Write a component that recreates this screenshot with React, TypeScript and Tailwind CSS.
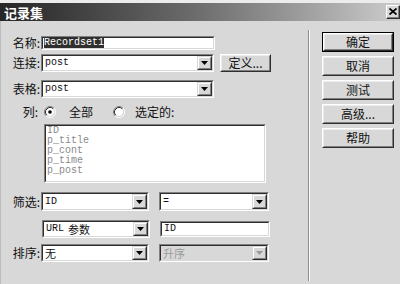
import React from 'react'

const ui = "font-['Noto_Sans_CJK_SC','Liberation_Sans',sans-serif] text-[12px] leading-none text-[#111]"
const mono = "font-['Liberation_Mono','Noto_Sans_CJK_SC',monospace] text-[10px] leading-none"
const cjkField = "text-[11px] leading-[12px]"

function Arrow({ disabled }: { disabled?: boolean }) {
    return (
        <div className="flex w-[15px] border border-t-[#d8d8d8] border-l-[#d8d8d8] border-b-[#2e2e2e] border-r-[#2e2e2e] bg-[#d8d8d8]">
            <div className="flex flex-1 items-center justify-center border border-t-white border-l-white border-b-[#808080] border-r-[#808080]">
                <svg width="7" height="4" viewBox="0 0 7 4">
                    <path d="M0 0h7L3.5 4z" fill={disabled ? '#9a9a9a' : '#000'} />
                </svg>
            </div>
        </div>
    )
}

function Field({ size, disabled, arrow, children }: { size: string; disabled?: boolean; arrow?: boolean; children?: React.ReactNode }) {
    return (
        <div className={`${size} flex border border-t-[#808080] border-l-[#808080] border-b-white border-r-white`}>
            <div className={`flex flex-1 min-w-0 border border-t-[#2e2e2e] border-l-[#2e2e2e] border-b-[#d8d8d8] border-r-[#d8d8d8] ${disabled ? 'bg-[#d8d8d8]' : 'bg-white'}`}>
                <div className="flex flex-1 min-w-0 items-center whitespace-nowrap pl-[2px]">{children}</div>
                {arrow && <Arrow disabled={disabled} />}
            </div>
        </div>
    )
}

function Btn({ label, def, size }: { label: string; def?: boolean; size: string }) {
    return (
        <div className={`${size} flex ${def ? 'border border-black' : ''}`}>
            <div className="flex flex-1 border border-t-white border-l-white border-b-[#2e2e2e] border-r-[#2e2e2e]">
                <div className="flex flex-1 items-center justify-center border border-t-[#ececec] border-l-[#ececec] border-b-[#808080] border-r-[#808080] bg-[#d8d8d8]">
                    {label}
                </div>
            </div>
        </div>
    )
}

function Radio({ checked }: { checked?: boolean }) {
    return (
        <svg width="12" height="12" viewBox="0 0 12 12">
            <circle cx="6" cy="6" r="4.2" fill="#fff" />
            <path d="M2.11 9.89A5.5 5.5 0 0 1 9.89 2.11" stroke="#808080" fill="none" />
            <path d="M9.89 2.11A5.5 5.5 0 0 1 2.11 9.89" stroke="#fff" fill="none" />
            <path d="M2.82 9.18A4.5 4.5 0 0 1 9.18 2.82" stroke="#2e2e2e" fill="none" />
            <path d="M9.18 2.82A4.5 4.5 0 0 1 2.82 9.18" stroke="#d8d8d8" fill="none" />
            {checked && <circle cx="6" cy="6" r="1.8" fill="#000" />}
        </svg>
    )
}

function Label({ text }: { text: string }) {
    return <div className="w-[40px] pr-[1px] text-right">{text}</div>
}

const columns = ['ID', 'p_title', 'p_cont', 'p_time', 'p_post']

export default function App() {
    return (
        <div className={`w-[400px] h-[284px] overflow-hidden bg-[#d8d8d8] ${ui}`}>
            <div className="h-[3px] bg-[#ececec]" />
            {/* title bar */}
            <div className="flex h-[18px] items-center justify-between bg-gradient-to-r from-[#262626] via-[#6e6e6e] to-[#cdcdcd] pl-[4px]">
                <span className="text-[13px] font-bold text-white">记录集</span>
                <div className="flex h-[14px] w-[14px] border border-t-white border-l-white border-b-[#2e2e2e] border-r-[#2e2e2e] bg-[#d8d8d8]">
                    <div className="flex flex-1 items-center justify-center border-b border-r border-b-[#808080] border-r-[#808080]">
                        <svg width="8" height="7" viewBox="0 0 8 7">
                            <path d="M0.5 0.5L7.5 6.5M7.5 0.5L0.5 6.5" stroke="#000" strokeWidth="1.7" />
                        </svg>
                    </div>
                </div>
            </div>

            <div className="flex h-[263px] border-l border-l-[#bdbdbd]">
                {/* form */}
                <div className="flex w-[307px] flex-col pt-[15px]">
                    <div className="flex h-[14px] items-center">
                        <Label text="名称:" />
                        <Field size="w-[174px] h-[14px]">
                            <span className={`${mono} bg-[#2f2f2f] text-white ml-[-1px]`}>Recordset1</span>
                        </Field>
                    </div>

                    <div className="mt-[4px] flex h-[18px] items-center">
                        <Label text="连接:" />
                        <Field size="w-[173px] h-[18px]" arrow>
                            <span className={mono}>post</span>
                        </Field>
                        <div className="ml-[6px]">
                            <Btn size="w-[51px] h-[18px]" label="定义..." />
                        </div>
                    </div>

                    <div className="mt-[8px] flex h-[18px] items-center">
                        <Label text="表格:" />
                        <Field size="w-[173px] h-[18px]" arrow>
                            <span className={mono}>post</span>
                        </Field>
                    </div>

                    <div className="mt-[7px] flex h-[14px] items-center">
                        <div className="w-[38px] pr-[1px] text-right">列:</div>
                        <div className="ml-[5px] flex items-center">
                            <Radio checked />
                        </div>
                        <span className="ml-[13px]">全部</span>
                        <div className="ml-[20px] flex items-center">
                            <Radio />
                        </div>
                        <span className="ml-[10px]">选定的:</span>
                    </div>

                    <div className="mt-[5px] ml-[43px] flex h-[59px] w-[222px] border border-t-[#808080] border-l-[#808080] border-b-white border-r-white">
                        <div className="flex-1 overflow-hidden border border-t-[#2e2e2e] border-l-[#2e2e2e] border-b-[#d8d8d8] border-r-[#d8d8d8] bg-white pl-[1px]">
                            {columns.map((c) => (
                                <div key={c} className={`${mono} leading-[11.5px] text-[#8a8a8a]`}>
                                    {c}
                                </div>
                            ))}
                        </div>
                    </div>

                    <div className="mt-[9px] flex h-[19px] items-center">
                        <Label text="筛选:" />
                        <Field size="w-[108px] h-[19px]" arrow>
                            <span className={mono}>ID</span>
                        </Field>
                        <div className="ml-[10px]">
                            <Field size="w-[110px] h-[19px]" arrow>
                                <span className={mono}>=</span>
                            </Field>
                        </div>
                    </div>

                    <div className="mt-[9px] flex h-[18px] items-center">
                        <div className="w-[41px]" />
                        <Field size="w-[108px] h-[18px]" arrow>
                            <span className={mono}>URL </span>
                            <span className={`ml-[4px] ${cjkField}`}>参数</span>
                        </Field>
                        <div className="ml-[10px]">
                            <Field size="w-[110px] h-[16px]">
                                <span className={mono}>ID</span>
                            </Field>
                        </div>
                    </div>

                    <div className="mt-[6px] flex h-[18px] items-center">
                        <Label text="排序:" />
                        <Field size="w-[108px] h-[18px]" arrow>
                            <span className={cjkField}>无</span>
                        </Field>
                        <div className="ml-[10px]">
                            <Field size="w-[110px] h-[18px]" arrow disabled>
                                <span className={`${cjkField} text-[#9a9a9a]`}>升序</span>
                            </Field>
                        </div>
                    </div>
                </div>

                {/* separator */}
                <div className="mt-[9px] h-[251px] w-[2px] border-l border-r border-l-[#8c8c8c] border-r-white" />

                {/* buttons */}
                <div className="flex flex-col gap-[4px] pl-[12px] pt-[11px]">
                    <Btn size="w-[72px] h-[20px]" label="确定" def />
                    <Btn size="w-[72px] h-[20px]" label="取消" />
                    <Btn size="w-[72px] h-[20px]" label="测试" />
                    <Btn size="w-[72px] h-[20px]" label="高级..." />
                    <Btn size="w-[72px] h-[20px]" label="帮助" />
                </div>
            </div>
        </div>
    )
}
